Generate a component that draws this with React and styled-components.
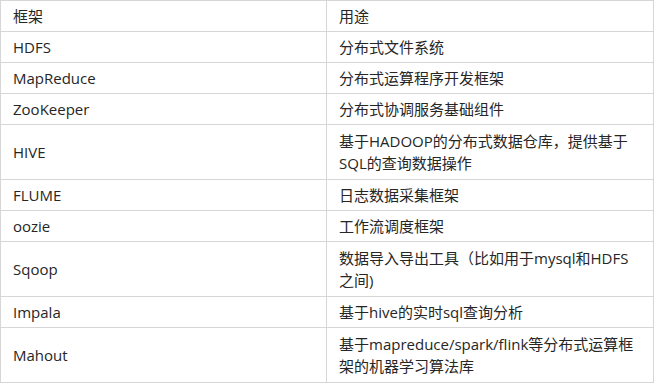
import React from "react";
import styled, { createGlobalStyle } from "styled-components";

const GlobalStyle = createGlobalStyle`
  html, body {
    margin: 0;
    padding: 0;
    background: #ffffff;
  }
`;

const rows = [
  { name: "HDFS", use: ["分布式文件系统"] },
  { name: "MapReduce", use: ["分布式运算程序开发框架"] },
  { name: "ZooKeeper", use: ["分布式协调服务基础组件"] },
  { name: "HIVE", use: ["基于HADOOP的分布式数据仓库，提供基于", "SQL的查询数据操作"] },
  { name: "FLUME", use: ["日志数据采集框架"] },
  { name: "oozie", use: ["工作流调度框架"] },
  { name: "Sqoop", use: ["数据导入导出工具（比如用于mysql和HDFS", "之间)"] },
  { name: "Impala", use: ["基于hive的实时sql查询分析"] },
  { name: "Mahout", use: ["基于mapreduce/spark/flink等分布式运算框", "架的机器学习算法库"] },
];

export default function App() {
  return (
    <>
      <GlobalStyle />
      <Table>
        <colgroup>
          <col style={{ width: 326 }} />
          <col />
        </colgroup>
        <tbody>
          <Row>
            <Cell>框架</Cell>
            <Cell>用途</Cell>
          </Row>
          {rows.map((r) => (
            <Row key={r.name}>
              <Cell $tall={r.use.length > 1}>{r.name}</Cell>
              <Cell $tall={r.use.length > 1}>
                {r.use.map((line, i) => (
                  <React.Fragment key={i}>
                    {i > 0 && <br />}
                    {line}
                  </React.Fragment>
                ))}
              </Cell>
            </Row>
          ))}
        </tbody>
      </Table>
    </>
  );
}

const Table = styled.table`
  width: 654px;
  border-collapse: collapse;
  table-layout: fixed;
  font-family: "Open Sans", "Noto Sans CJK SC", sans-serif;
  font-size: 15px;
  color: #262626;
`;

const Row = styled.tr`
  background: #ffffff;
`;

const Cell = styled.td`
  border: 1px solid #d6d6d6;
  padding: ${(p) => (p.$tall ? "5px 12px" : "4px 12px")};
  line-height: 22px;
  vertical-align: middle;
  white-space: nowrap;
`;
